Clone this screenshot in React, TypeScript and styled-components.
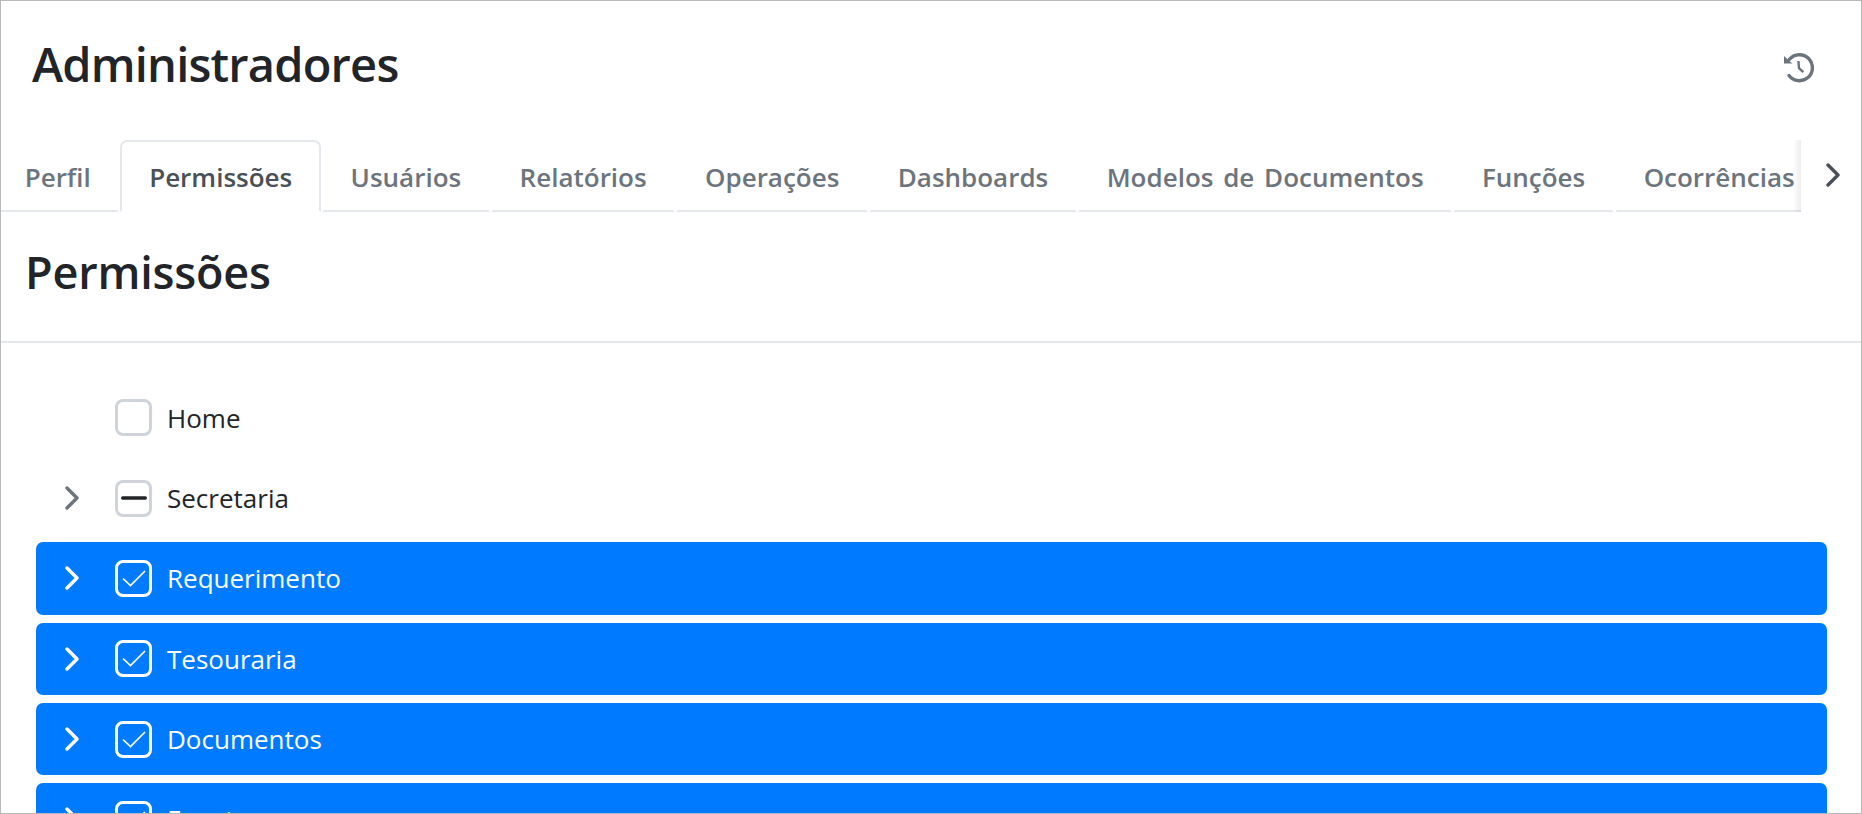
import React from "react";
import styled, { createGlobalStyle } from "styled-components";

const Global = createGlobalStyle`
  html, body { margin: 0; padding: 0; height: 100%; overflow: hidden; background: #fff; }
  * { box-sizing: border-box; }
`;

const Frame = styled.div`
  height: 814px;
  border: 1px solid #b9b9b9;
  overflow: hidden;
  background: #fff;
  font-family: "Open Sans", "Noto Sans", sans-serif;
  color: #212529;
`;

const Header = styled.header`
  height: 139px;
  display: flex;
  align-items: flex-start;
  justify-content: space-between;
  padding: 32px 47px 0 31px;
`;

const Title = styled.h1`
  margin: 0;
  font-size: 47px;
  line-height: 62px;
  font-weight: 600;
  letter-spacing: -0.8px;
`;

const HistoryButton = styled.button`
  border: 0;
  background: none;
  padding: 0;
  margin-top: 20px;
  width: 30px;
  height: 30px;
  color: #6c757d;
  svg { display: block; }
`;

const TabBar = styled.nav`
  display: flex;
  height: 72px;
`;

const TabScroller = styled.div`
  position: relative;
  width: 1800px;
  overflow: hidden;
  &::after {
    content: "";
    position: absolute;
    right: 0;
    top: 0;
    bottom: 0;
    width: 8px;
    background: linear-gradient(to right, rgba(0,0,0,0), rgba(0,0,0,0.07));
  }
`;

const TabTrack = styled.div`
  display: flex;
  gap: 1px;
  margin-left: -5px;
  width: max-content;
`;

const Tab = styled.a<{ $active?: boolean }>`
  display: block;
  height: 72px;
  padding: 0 26.7px;
  font-size: 26px;
  line-height: 70px;
  font-weight: 600;
  word-spacing: 3px;
  white-space: nowrap;
  color: ${(p) => (p.$active ? "#495057" : "#6c757d")};
  border: 2px solid ${(p) => (p.$active ? "#e4e7eb" : "transparent")};
  border-bottom: ${(p) => (p.$active ? "2px solid #fff" : "2px solid #e4e7eb")};
  border-radius: 7px 7px 0 0;
`;

const TabNext = styled.button`
  flex: 1;
  border: 0;
  background: none;
  padding: 0 0 0 25px;
  display: flex;
  align-items: flex-start;
  color: #495057;
  svg { display: block; margin-top: 23px; }
`;

const SectionHead = styled.div`
  height: 131px;
  padding: 30px 24px 0;
  border-bottom: 2px solid #e4e7eb;
`;

const SectionTitle = styled.h2`
  margin: 0;
  font-size: 45px;
  line-height: 60px;
  font-weight: 600;
  letter-spacing: -0.2px;
`;

const Tree = styled.ul`
  list-style: none;
  margin: 0;
  padding: 38.6px 34px 0 35px;
`;

const Row = styled.li<{ $selected?: boolean }>`
  display: flex;
  align-items: center;
  height: 72.33px;
  margin-bottom: 8px;
  border-radius: 7px;
  padding-left: 29px;
  font-size: 26px;
  background: ${(p) => (p.$selected ? "#007bff" : "transparent")};
  color: ${(p) => (p.$selected ? "#fff" : "#212529")};
`;

const Toggler = styled.span<{ $selected?: boolean }>`
  width: 50px;
  height: 24px;
  color: ${(p) => (p.$selected ? "#fff" : "#6c757d")};
  svg { display: block; }
`;

const Box = styled.span<{ $selected?: boolean }>`
  width: 37px;
  height: 37px;
  margin-right: 15px;
  border-radius: 8px;
  border: 3px solid ${(p) => (p.$selected ? "#fff" : "#ced4da")};
  display: flex;
  align-items: center;
  justify-content: center;
  flex: none;
`;

const Chevron = () => (
  <svg width="14" height="24" viewBox="0 0 14 24" fill="none" stroke="currentColor" strokeWidth="3.4" strokeLinecap="round" strokeLinejoin="round">
    <path d="M2 2l10 10L2 22" />
  </svg>
);

const Check = () => (
  <svg width="24" height="17" viewBox="0 0 24 17" fill="none" stroke="#fff" strokeWidth="1.7">
    <path d="M1 8.5l7.5 7L23 1" />
  </svg>
);

const Dash = () => (
  <svg width="26" height="4" viewBox="0 0 26 4">
    <rect width="26" height="3.4" y="0.3" rx="1.7" fill="#212529" />
  </svg>
);

const tabs = ["Perfil", "Permissões", "Usuários", "Relatórios", "Operações", "Dashboards", "Modelos de Documentos", "Funções", "Ocorrências"];

const rows: { label: string; state: "none" | "partial" | "checked"; toggler: boolean }[] = [
  { label: "Home", state: "none", toggler: false },
  { label: "Secretaria", state: "partial", toggler: true },
  { label: "Requerimento", state: "checked", toggler: true },
  { label: "Tesouraria", state: "checked", toggler: true },
  { label: "Documentos", state: "checked", toggler: true },
  { label: "Eventos", state: "checked", toggler: true },
];

export default function App() {
  return (
    <>
      <Global />
      <Frame>
        <Header>
          <Title>Administradores</Title>
          <HistoryButton aria-label="Histórico">
            <svg width="30" height="30" viewBox="0 0 30 30" fill="none" stroke="currentColor" strokeWidth="3.4">
              <path d="M5.6 6.2A13 13 0 1 1 5 22.5" strokeLinecap="round" />
              <path d="M0 3v7.6h8.4z" fill="currentColor" stroke="none" />
              <path d="M14.4 8l.6 7.2 4.3 4" strokeWidth="2.4" />
            </svg>
          </HistoryButton>
        </Header>
        <TabBar>
          <TabScroller>
            <TabTrack>
              {tabs.map((t) => (
                <Tab key={t} $active={t === "Permissões"}>{t}</Tab>
              ))}
            </TabTrack>
          </TabScroller>
          <TabNext aria-label="Próximo"><Chevron /></TabNext>
        </TabBar>
        <SectionHead>
          <SectionTitle>Permissões</SectionTitle>
        </SectionHead>
        <Tree>
          {rows.map((r) => {
            const sel = r.state === "checked";
            return (
              <Row key={r.label} $selected={sel}>
                <Toggler $selected={sel}>{r.toggler && <Chevron />}</Toggler>
                <Box $selected={sel}>
                  {sel && <Check />}
                  {r.state === "partial" && <Dash />}
                </Box>
                {r.label}
              </Row>
            );
          })}
        </Tree>
      </Frame>
    </>
  );
}
